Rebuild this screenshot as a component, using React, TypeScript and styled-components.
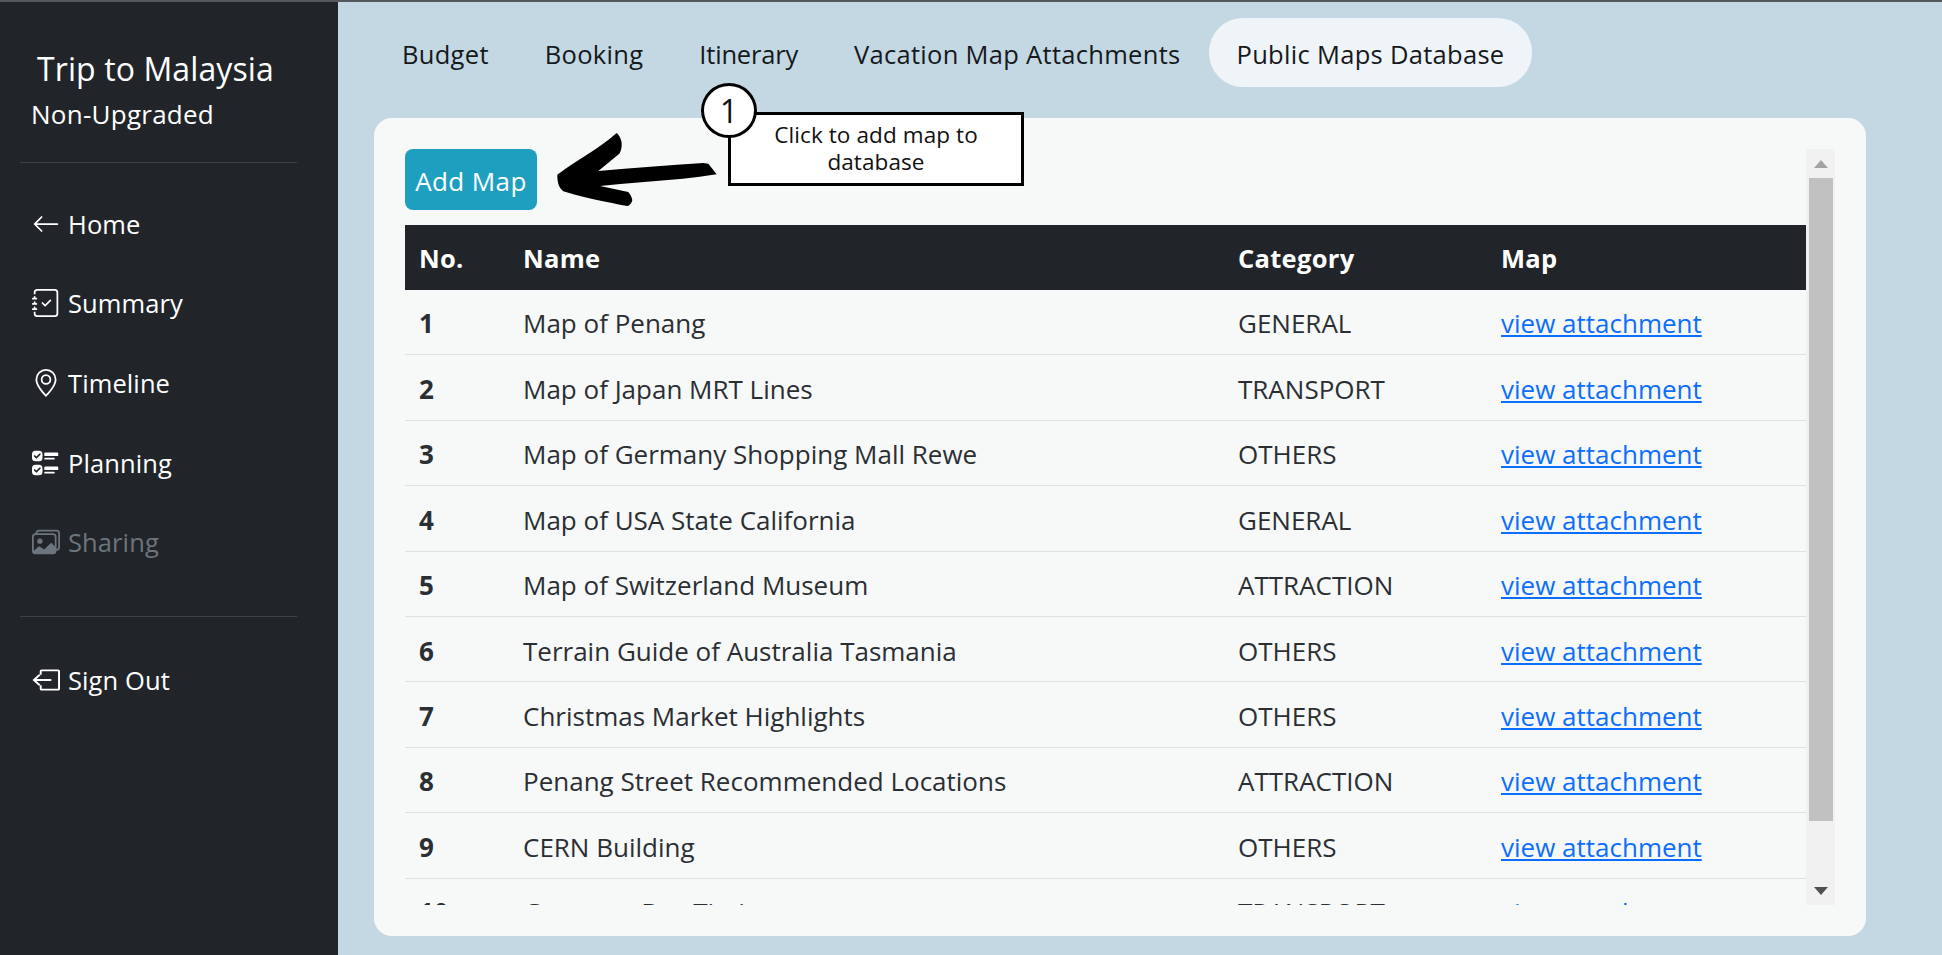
import React from 'react';
import styled, { createGlobalStyle } from 'styled-components';
import { BsArrowLeft, BsJournalCheck, BsGeoAlt, BsUiChecks, BsImages } from 'react-icons/bs';

const GlobalStyle = createGlobalStyle`
  html, body {
    margin: 0;
    height: 100%;
    overflow: hidden;
    background: #c3d8e3;
    font-family: "Open Sans", "Noto Sans", sans-serif;
  }
  * {
    box-sizing: border-box;
  }
`;

const Page = styled.div`
  position: relative;
  width: 1942px;
  height: 955px;
  display: flex;
  border-top: 2px solid #54585c;
`;

const Sidebar = styled.aside`
  width: 338px;
  flex: none;
  background: #212529;
  color: #fff;
  padding: 46px 41px 0 20px;
`;

const TripTitle = styled.div`
  font-size: 32px;
  line-height: 42px;
  padding-left: 17px;
  letter-spacing: 0.1px;
`;

const PlanLabel = styled.div`
  font-size: 26px;
  line-height: 48px;
  padding-left: 11px;
  letter-spacing: 0.25px;
`;

const Divider = styled.hr<{ $top: number; $bottom: number }>`
  border: 0;
  height: 1px;
  background: #3d4145;
  margin: ${p => p.$top}px 0 ${p => p.$bottom}px;
`;

const NavList = styled.nav`
  display: flex;
  flex-direction: column;
`;

const NavItem = styled.a<{ $disabled?: boolean }>`
  display: flex;
  align-items: center;
  gap: 8px;
  height: 79.6px;
  padding-left: 12px;
  font-size: 25.5px;
  letter-spacing: 0.1px;
  color: ${p => (p.$disabled ? '#6c757d' : '#fff')};

  svg {
    width: 28px;
    height: 28px;
    flex: none;
  }
`;

const Main = styled.main`
  flex: 1;
  min-width: 0;
  padding: 16px 76px 19px 36px;
  display: flex;
  flex-direction: column;
`;

const Tabs = styled.div`
  display: flex;
  margin-bottom: 31px;
`;

const Tab = styled.a<{ $active?: boolean; $tight?: boolean }>`
  height: 69px;
  padding: 2px 28px 0;
  display: flex;
  align-items: center;
  font-size: 25.5px;
  letter-spacing: ${p => (p.$tight ? '-0.2px' : '0.3px')};
  color: #16191c;
  border-radius: 34px;
  background: ${p => (p.$active ? '#eff4f8' : 'transparent')};
`;

const Card = styled.section`
  flex: 1;
  min-height: 0;
  background: #f7f9f9;
  border-radius: 18px;
  padding: 31px;
  display: flex;
`;

const Scroller = styled.div`
  flex: 1;
  min-width: 0;
  overflow-y: hidden;
`;

const ScrollTrack = styled.div`
  width: 29px;
  flex: none;
  display: flex;
  flex-direction: column;
  background: #f1f1f1;
`;

const ScrollButton = styled.div`
  height: 29px;
  flex: none;
  display: flex;
  align-items: center;
  justify-content: center;
`;

const ScrollThumb = styled.div`
  height: 643px;
  flex: none;
  margin: 0 2px 0 3px;
  background: #c1c1c1;
`;

const ScrollRest = styled.div`
  flex: 1;
`;

const AddButton = styled.button`
  display: block;
  width: 132px;
  height: 61px;
  margin-bottom: 15px;
  border: 0;
  border-radius: 8px;
  background: #1f9fbf;
  color: #fff;
  font-family: inherit;
  font-size: 26px;
  letter-spacing: 0.4px;
  padding: 2px 0 0;
`;

const MapTable = styled.table`
  width: 1401px;
  table-layout: fixed;
  border-collapse: collapse;
  margin-bottom: 27px;
  color: #2b2f33;
  font-size: 26px;
`;

const HeadCell = styled.th<{ $width: number }>`
  width: ${p => p.$width}px;
  height: 64.5px;
  padding: 1px 14px 0;
  background: #212529;
  color: #fff;
  font-weight: 700;
  font-size: 25.5px;
  text-align: left;
  letter-spacing: 0.3px;
`;

const Row = styled.tr`
  height: 65.4px;
  border-bottom: 1px solid #dee2e6;
`;

const Cell = styled.td<{ $bold?: boolean }>`
  padding: 3px 14px 0;
  font-weight: ${p => (p.$bold ? 700 : 400)};
  white-space: nowrap;
`;

const AttachmentLink = styled.a`
  color: #0d6efd;
  text-decoration: underline;
`;

const Callout = styled.div`
  position: absolute;
  left: 701px;
  top: 81px;
  width: 323px;
  height: 105px;
  pointer-events: none;
`;

const CalloutBox = styled.div`
  position: absolute;
  left: 27px;
  top: 29px;
  width: 296px;
  height: 74px;
  padding-bottom: 2px;
  background: #fff;
  border: 3px solid #000;
  display: flex;
  align-items: center;
  justify-content: center;
  text-align: center;
  font-size: 22.5px;
  line-height: 27px;
  letter-spacing: 0.1px;
  color: #111;
`;

const CalloutBadge = styled.div`
  position: absolute;
  left: 0;
  top: 0;
  width: 56px;
  height: 55px;
  border-radius: 50%;
  background: #fff;
  border: 3px solid #000;
  display: flex;
  align-items: center;
  justify-content: center;
  font-size: 32px;
  color: #111;
`;

const ArrowMark = styled.svg`
  position: absolute;
  left: 550px;
  top: 125px;
  width: 175px;
  height: 85px;
`;

const maps = [
  ['Map of Penang', 'GENERAL'],
  ['Map of Japan MRT Lines', 'TRANSPORT'],
  ['Map of Germany Shopping Mall Rewe', 'OTHERS'],
  ['Map of USA State California', 'GENERAL'],
  ['Map of Switzerland Museum', 'ATTRACTION'],
  ['Terrain Guide of Australia Tasmania', 'OTHERS'],
  ['Christmas Market Highlights', 'OTHERS'],
  ['Penang Street Recommended Locations', 'ATTRACTION'],
  ['CERN Building', 'OTHERS'],
  ['Germany Bus Timings', 'TRANSPORT'],
];

const SignOutIcon = () => (
  <svg viewBox="0 0 29 29" fill="none" stroke="currentColor" strokeWidth="2">
    <path d="M9 9V5.5Q9 4.5 10 4.5H27Q28 4.5 28 5.5V23.5Q28 24.5 27 24.5H10Q9 24.5 9 23.5V20" />
    <path d="M20 14.5H3M8 9L2 14.5L8 20" />
  </svg>
);

const App: React.FC = () => {
  return (
    <Page>
      <GlobalStyle />
      <Sidebar>
        <TripTitle>Trip to Malaysia</TripTitle>
        <PlanLabel>Non-Upgraded</PlanLabel>
        <Divider $top={24} $bottom={21} />
        <NavList>
          <NavItem><BsArrowLeft />Home</NavItem>
          <NavItem><BsJournalCheck />Summary</NavItem>
          <NavItem><BsGeoAlt />Timeline</NavItem>
          <NavItem><BsUiChecks />Planning</NavItem>
          <NavItem $disabled><BsImages />Sharing</NavItem>
        </NavList>
        <Divider $top={34} $bottom={23} />
        <NavList>
          <NavItem><SignOutIcon />Sign Out</NavItem>
        </NavList>
      </Sidebar>
      <Main>
        <Tabs>
          <Tab>Budget</Tab>
          <Tab>Booking</Tab>
          <Tab $tight>Itinerary</Tab>
          <Tab>Vacation Map Attachments</Tab>
          <Tab $active>Public Maps Database</Tab>
        </Tabs>
        <Card>
          <Scroller>
            <AddButton>Add Map</AddButton>
            <MapTable>
              <thead>
                <tr>
                  <HeadCell $width={104}>No.</HeadCell>
                  <HeadCell $width={715}>Name</HeadCell>
                  <HeadCell $width={263}>Category</HeadCell>
                  <HeadCell $width={319}>Map</HeadCell>
                </tr>
              </thead>
              <tbody>
                {maps.map(([name, category], i) => (
                  <Row key={name}>
                    <Cell $bold>{i + 1}</Cell>
                    <Cell>{name}</Cell>
                    <Cell>{category}</Cell>
                    <Cell><AttachmentLink href="#">view attachment</AttachmentLink></Cell>
                  </Row>
                ))}
              </tbody>
            </MapTable>
          </Scroller>
          <ScrollTrack>
            <ScrollButton>
              <svg width="14" height="8" viewBox="0 0 14 8"><path d="M7 0l7 8H0z" fill="#a3a3a3" /></svg>
            </ScrollButton>
            <ScrollThumb />
            <ScrollRest />
            <ScrollButton>
              <svg width="14" height="8" viewBox="0 0 14 8"><path d="M7 8l7-8H0z" fill="#505050" /></svg>
            </ScrollButton>
          </ScrollTrack>
        </Card>
      </Main>
      <ArrowMark viewBox="550 125 175 85">
        <path
          d="M557.3 172.7 C577 158 600 146 616.7 131 C620 134 622 139 621.7 143.3 C621.5 147 620.5 150 619.3 151.7 L598.3 169 C633 166 668 163 703.3 161 L708.3 161.7 C711 165 714 169 716.7 172.3 C705 174 694 175.5 683 176.7 C655 179 627 181 600 184 L628.3 190 C630.5 192.5 632 195.5 632.3 198.3 C632 200.5 630 203 628 204 C621 203 614 201.5 606.7 200 C592 197 578 194 563.3 189.3 C560.5 187 558.8 184 558.3 181.7 C557.6 178.5 557.2 175.5 557.3 172.7 Z"
          fill="#000"
        />
      </ArrowMark>
      <Callout>
        <CalloutBox>Click to add map to<br />database</CalloutBox>
        <CalloutBadge>1</CalloutBadge>
      </Callout>
    </Page>
  );
};

export default App;
